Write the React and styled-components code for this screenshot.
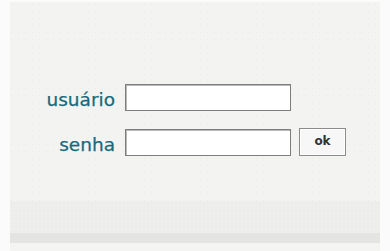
import React from 'react';
import styled, { createGlobalStyle } from 'styled-components';

const Global = createGlobalStyle`
  html, body {
    margin: 0;
    padding: 0;
    background: #fbfbfb;
  }
  body {
    font-family: "DejaVu Sans", Verdana, sans-serif;
  }
`;

const Page = styled.div`
  width: 390px;
  height: 251px;
  padding: 2px 10px 0 10px;
  box-sizing: border-box;
  overflow: hidden;
`;

const Panel = styled.div`
  height: 249px;
  background-color: #f3f4f2;
  display: flex;
  flex-direction: column;
`;

const FormArea = styled.div`
  height: 199px;
  box-sizing: border-box;
  padding-top: 82px;
  background-image: radial-gradient(circle, #e9ebe8 0.6px, transparent 0.9px);
  background-size: 7px 7px;
  background-position: 12px 20px;
`;

const Grid = styled.form`
  display: grid;
  grid-template-columns: 105px 166px auto;
  column-gap: 10px;
  row-gap: 17px;
  align-items: center;
`;

const Label = styled.label`
  justify-self: end;
  font-size: 18.5px;
  color: #166a7c;
  -webkit-text-stroke: 0.25px #166a7c;
  line-height: 1;
  padding-top: 6px;
`;

const Field = styled.input`
  width: 166px;
  height: 27px;
  box-sizing: border-box;
  border: 1px solid #7d7d7d;
  box-shadow: inset 1px 1px 0 #b9b9b9;
  background: #fff;
  margin: 0;
  padding: 2px 4px;
  outline: none;
`;

const OkButton = styled.button`
  justify-self: start;
  margin-left: -2px;
  width: 47px;
  height: 28px;
  box-sizing: border-box;
  border: 1px solid #8c8c8c;
  box-shadow: inset 0 0 0 1px #fff;
  background: #f7f7f7;
  font-family: "DejaVu Sans", Verdana, sans-serif;
  font-weight: bold;
  font-size: 12px;
  color: #333;
  padding: 0 0 3px 0;
`;

const Band = styled.div`
  height: ${(p) => p.h}px;
  background-color: ${(p) => p.bg};
  background-image: ${(p) =>
    p.dotted ? 'radial-gradient(circle, #e6e8e5 0.5px, transparent 0.8px)' : 'none'};
  background-size: 4px 4px;
`;

export default function App() {
  return (
    <Page>
      <Global />
      <Panel>
        <FormArea>
          <Grid onSubmit={(e) => e.preventDefault()}>
            <Label htmlFor="usuario">usuário</Label>
            <Field id="usuario" type="text" />
            <span />
            <Label htmlFor="senha">senha</Label>
            <Field id="senha" type="password" />
            <OkButton type="submit">ok</OkButton>
          </Grid>
        </FormArea>
        <Band h={32} bg="#eeefed" dotted />
        <Band h={10} bg="#e4e5e3" />
        <Band h={8} bg="#f4f5f3" />
      </Panel>
    </Page>
  );
}
